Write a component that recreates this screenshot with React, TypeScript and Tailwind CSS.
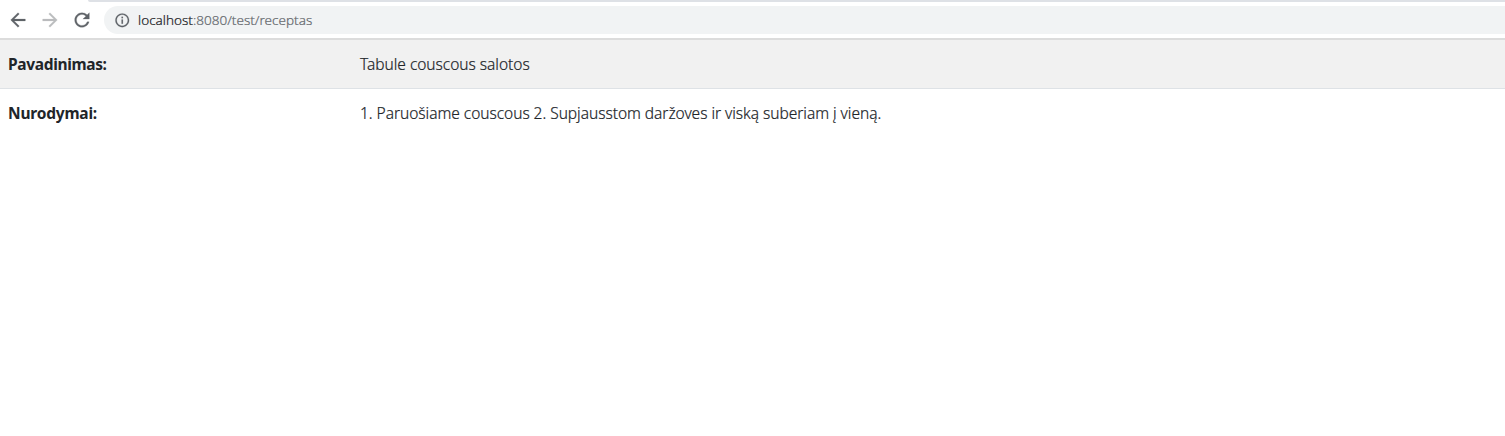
type GlyphProps = { d: string; size: number; className: string };

const BACK = "M20 11H7.83l5.59-5.59L12 4l-8 8 8 8 1.41-1.41L7.83 13H20v-2z";
const FORWARD = "M12 4l-1.41 1.41L16.17 11H4v2h12.17l-5.58 5.59L12 20l8-8z";
const RELOAD =
  "M17.65 6.35A7.958 7.958 0 0 0 12 4c-4.42 0-7.99 3.58-7.99 8s3.57 8 7.99 8c3.73 0 6.84-2.55 7.73-6h-2.08A5.99 5.99 0 0 1 12 18c-3.31 0-6-2.69-6-6s2.69-6 6-6c1.66 0 3.14.69 4.22 1.78L13 11h7V4l-2.35 2.35z";
const INFO =
  "M11 7h2v2h-2zM11 11h2v6h-2zM12 2C6.48 2 2 6.48 2 12s4.48 10 10 10 10-4.48 10-10S17.52 2 12 2zm0 18c-4.41 0-8-3.59-8-8s3.59-8 8-8 8 3.59 8 8-3.59 8-8 8z";

function Glyph({ d, size, className }: GlyphProps) {
  return (
    <svg
      viewBox="0 0 24 24"
      width={size}
      height={size}
      fill="currentColor"
      stroke="currentColor"
      strokeWidth={0.25}
      className={className}
      aria-hidden
    >
      <path d={d} />
    </svg>
  );
}

function Toolbar() {
  return (
    <header className="h-10 border-b-2 border-[#dcdcdc] bg-white">
      <div className="ml-[88px] h-[2px] rounded-bl-sm bg-[#dee1e6]" />
      <div className="flex h-9 items-center pl-[7px]">
        <Glyph d={BACK} size={22} className="mr-[10px] shrink-0 text-[#5f6368]" />
        <Glyph d={FORWARD} size={22} className="mr-[10px] shrink-0 text-[#babcbe]" />
        <Glyph d={RELOAD} size={22} className="mr-[11px] shrink-0 text-[#5f6368]" />
        <div className="flex h-7 flex-1 items-center rounded-l-full bg-[#f1f3f4] pl-[10px]">
          <Glyph d={INFO} size={16.5} className="mr-[7.5px] shrink-0 text-[#5f6368]" />
          <span className="whitespace-nowrap font-['Noto_Sans',sans-serif] text-[13.5px] font-light tracking-[0.01px] text-[#64686d] [-webkit-text-stroke:0.2px]">
            <span className="text-[#202124]">localhost</span>:8080/test/receptas
          </span>
        </div>
      </div>
    </header>
  );
}

export default function App() {
  return (
    <div className="min-h-[436px] bg-white font-['Noto_Sans',sans-serif] text-[#212529]">
      <Toolbar />
      <dl className="text-[15.5px] leading-6">
        <div className="flex h-[49px] border-b border-[#dee2e6] bg-[#f1f1f1] pt-3 pl-2">
          <dt className="w-[352px] shrink-0 font-bold">
            <span className="tracking-[-0.34px]">Pavadinimas:</span>
          </dt>
          <dd className="font-light tracking-[-0.02px] [-webkit-text-stroke:0.2px]">
            Tabule couscous salotos
          </dd>
        </div>
        <div className="flex h-12 pt-3 pl-2">
          <dt className="w-[352px] shrink-0 font-bold">
            <span className="tracking-[-0.2px]">Nurodymai:</span>
          </dt>
          <dd className="font-light tracking-[-0.03px] [-webkit-text-stroke:0.2px]">
            1. Paruošiame couscous 2. Supjausstom daržoves ir viską suberiam į vieną.
          </dd>
        </div>
      </dl>
    </div>
  );
}
